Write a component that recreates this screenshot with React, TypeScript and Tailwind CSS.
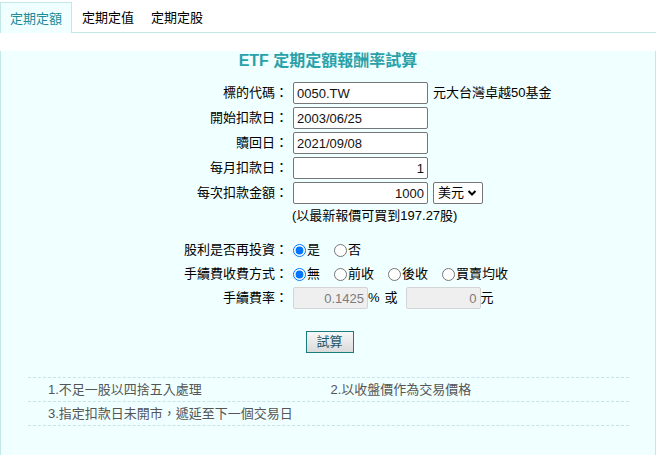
import React from 'react';

const tabs = ['定期定額', '定期定值', '定期定股'];

function Field({ label, children, className = '' }: { label: string; children: React.ReactNode; className?: string }) {
  return (
    <div className={`flex items-center ${className}`}>
      <div className="w-[287px] shrink-0 text-right">{label}</div>
      <div className="ml-[5px] flex items-center">{children}</div>
    </div>
  );
}

function TextBox({ value, right = false, width = 'w-[135px]' }: { value: string; right?: boolean; width?: string }) {
  return (
    <input
      readOnly
      value={value}
      className={`${width} h-[22px] rounded-[2px] border border-[#767676] bg-white px-[3px] text-[13px] text-[#111] outline-none ${right ? 'text-right' : ''}`}
    />
  );
}

function GreyBox({ value }: { value: string }) {
  return (
    <input
      readOnly
      value={value}
      className="h-[22px] w-[75px] rounded-[2px] border border-[#d4d4d4] bg-[#efefef] px-[3px] text-right text-[13px] text-[#7b7b7b] outline-none"
    />
  );
}

function Radio({ name, label, checked = false }: { name: string; label: string; checked?: boolean }) {
  return (
    <label className="flex items-center">
      <input type="radio" name={name} defaultChecked={checked} className="m-0 h-[13px] w-[13px]" />
      <span className="ml-[1px]">{label}</span>
    </label>
  );
}

export default function App() {
  return (
    <div className="h-[455px] w-[657px] bg-white font-['Liberation_Sans','Noto_Sans_CJK_TC',sans-serif] text-[13px] leading-[20px] text-black">
      {/* tabs */}
      <div className="flex h-[33px] w-[656px] items-end border-b border-[#c3e6e6]">
        {tabs.map((t, i) =>
          i === 0 ? (
            <div
              key={t}
              className="-mb-px flex h-[31px] w-[72px] items-center justify-center border border-b-0 border-[#c3e6e6] bg-[#f0ffff] pt-[2px] text-[#1c8a98]"
            >
              {t}
            </div>
          ) : (
            <div key={t} className="flex h-[31px] items-center pl-[10px] pr-[7px] pt-[2px]">
              {t}
            </div>
          )
        )}
      </div>

      {/* panel */}
      <div className="h-[420px] w-[656px] border border-t-0 border-[#c3e6e6] bg-[#f0ffff]">
        <div className="mt-[18px] text-center text-[16px] font-bold leading-[20px] text-[#2aa1a8]">
          ETF 定期定額報酬率試算
        </div>

        <div className="mt-[11px] flex flex-col gap-[3px]">
          <Field label="標的代碼：">
            <TextBox value="0050.TW" />
            <span className="ml-[5px]">元大台灣卓越50基金</span>
          </Field>
          <Field label="開始扣款日：">
            <TextBox value="2003/06/25" />
          </Field>
          <Field label="贖回日：">
            <TextBox value="2021/09/08" />
          </Field>
          <Field label="每月扣款日：">
            <TextBox value="1" right />
          </Field>
          <Field label="每次扣款金額：">
            <TextBox value="1000" right />
            <div className="ml-[5px] flex h-[22px] w-[50px] items-center rounded-[2px] border border-[#767676] bg-white pl-[4px]">
              <span>美元</span>
              <svg width="10" height="8" viewBox="0 0 10 8" className="ml-[3px]">
                <path d="M1.5 2 L5 5.5 L8.5 2" fill="none" stroke="#000" strokeWidth="2" />
              </svg>
            </div>
          </Field>
        </div>

        <Field label="" className="mt-[2px] h-[20px]">
          <span className="-ml-[1px]">(以最新報價可買到197.27股)</span>
        </Field>

        <div className="mt-[14px] flex flex-col gap-[4px]">
          <Field label="股利是否再投資：" className="h-[20px]">
            <div className="flex items-center gap-[14px]">
              <Radio name="div" label="是" checked />
              <Radio name="div" label="否" />
            </div>
          </Field>
          <Field label="手續費收費方式：" className="h-[20px]">
            <div className="flex items-center gap-[14px]">
              <Radio name="fee" label="無" checked />
              <Radio name="fee" label="前收" />
              <Radio name="fee" label="後收" />
              <Radio name="fee" label="買賣均收" />
            </div>
          </Field>
        </div>

        <Field label="手續費率：" className="mt-[3px] h-[22px]">
          <GreyBox value="0.1425" />
          <span>%</span>
          <span className="ml-[5px]">或</span>
          <span className="ml-[8px] flex">
            <GreyBox value="0" />
          </span>
          <span>元</span>
        </Field>

        <div className="mt-[22px] flex justify-center pl-[3px]">
          <button className="h-[22px] w-[48px] border border-[#1a7c7e] bg-gradient-to-b from-[#f7f7f7] to-[#dadada] text-[13px] leading-[20px] text-[#1e5668]">
            試算
          </button>
        </div>

        <div className="ml-[27px] mt-[24px] w-[601px] border-t border-dashed border-[#c8e4e4] text-[#555]">
          <div className="grid h-[24px] grid-cols-2 items-center border-b border-dashed border-[#c8e4e4]">
            <div className="pl-[20px]">1.不足一股以四捨五入處理</div>
            <div className="pl-[2px]">2.以收盤價作為交易價格</div>
          </div>
          <div className="grid h-[24px] grid-cols-2 items-center border-b border-dashed border-[#c8e4e4]">
            <div className="pl-[20px]">3.指定扣款日未開市，遞延至下一個交易日</div>
          </div>
        </div>
      </div>
    </div>
  );
}
